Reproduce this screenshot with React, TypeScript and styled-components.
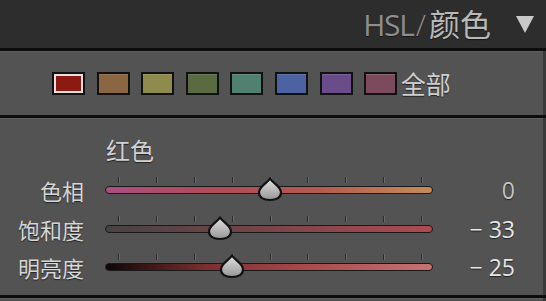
import styled, { createGlobalStyle } from "styled-components";

const GlobalStyle = createGlobalStyle`
  body {
    margin: 0;
    background: #3a3a3a;
  }
`;

const CJK = `"Noto Sans CJK SC", "Noto Sans", sans-serif`;
const LATIN = `"Open Sans", "Noto Sans CJK SC", sans-serif`;

const Frame = styled.div`
  width: 546px;
  height: 301px;
  display: flex;
  flex-direction: column;
  background: #3a3a3a;
  overflow: hidden;
`;

const Header = styled.div`
  height: 48px;
  flex: none;
  background: #2d2d2d;
  display: flex;
  align-items: center;
  justify-content: flex-end;
  padding-right: 11px;
  gap: 24px;
`;

const Title = styled.div`
  display: flex;
  align-items: baseline;
  font-size: 30px;
  line-height: 48px;
  color: #8e8e8e;
  text-shadow: 0 1px 1px rgba(0, 0, 0, 0.5);
  .hsl {
    font-family: ${LATIN};
    letter-spacing: -1.2px;
  }
  .slash {
    font-family: ${LATIN};
    font-weight: 300;
    margin: 0 3px 0 2px;
  }
  .active {
    font-family: ${CJK};
    font-size: 31px;
    color: #b9b9b9;
  }
`;

const Collapse = styled.svg`
  display: block;
`;

const Rule = styled.div`
  height: 3px;
  flex: none;
  background: #0d0d0d;
`;

const Panel = styled.div<{ $h: number }>`
  width: 543px;
  height: ${(p) => p.$h}px;
  flex: none;
  background: #535353;
  box-shadow: inset 0 1px 0 #5e5e5e;
`;

const SwatchRow = styled.div`
  height: 100%;
  display: flex;
  align-items: center;
  padding-left: 52px;
  gap: 11.6px;
`;

const Swatch = styled.div<{ $c: string; $on?: boolean }>`
  width: 33px;
  height: 23px;
  box-sizing: border-box;
  border: 2px solid #111;
  background: ${(p) => p.$c};
  box-shadow: ${(p) => (p.$on ? "inset 0 0 0 2px #e8e0e0" : "inset 0 1px 0 rgba(255,255,255,0.12)")};
`;

const AllLabel = styled.span`
  font-family: ${CJK};
  font-size: 25px;
  color: #cfcfcf;
  margin-left: -8px;
  text-shadow: 0 1px 1px rgba(0, 0, 0, 0.6);
`;

const Adjust = styled.div`
  padding-top: 18px;
`;

const ColorName = styled.div`
  font-family: ${CJK};
  font-size: 24px;
  line-height: 28px;
  color: #d2d2d2;
  padding-left: 106px;
  margin-bottom: 7px;
  text-shadow: 0 1px 1px rgba(0, 0, 0, 0.6);
`;

const Row = styled.div`
  display: grid;
  grid-template-columns: 84px 21px 328px 82px;
  height: 38.4px;
`;

const Label = styled.div`
  grid-column: 1;
  font-family: ${CJK};
  font-size: 22px;
  color: #d6d6d6;
  display: flex;
  align-items: center;
  justify-content: flex-end;
  text-shadow: 0 1px 1px rgba(0, 0, 0, 0.6);
`;

const SliderCell = styled.div`
  grid-column: 3;
  position: relative;
`;

const Track = styled.div<{ $g: string }>`
  position: absolute;
  left: 0;
  right: 0;
  top: 50%;
  height: 8px;
  margin-top: -4px;
  box-sizing: border-box;
  border-radius: 4px;
  border: 1.5px solid #1a1a1a;
  background: ${(p) => p.$g};
`;

const Ticks = styled.div`
  position: absolute;
  left: 13px;
  right: 11px;
  top: 50%;
  margin-top: -13px;
  height: 6px;
  display: flex;
  justify-content: space-between;
`;

const Tick = styled.span`
  width: 1px;
  height: 6px;
  background: #2c2c2c;
  box-shadow: 1px 0 0 #6a6a6a;
`;

const Thumb = styled.svg`
  position: absolute;
  top: 50%;
  margin-top: -13px;
  transform: translateX(-50%);
`;

const Value = styled.div<{ $dim?: boolean }>`
  grid-column: 4;
  font-family: ${LATIN};
  font-size: 23px;
  color: ${(p) => (p.$dim ? "#c4c4c4" : "#e6e6e6")};
  display: flex;
  align-items: center;
  justify-content: flex-end;
  white-space: pre;
  text-shadow: 0 1px 1px rgba(0, 0, 0, 0.6);
`;

const swatches = ["#8c1a10", "#8b6642", "#8e8b4c", "#5a6b42", "#4f8070", "#4c62a2", "#6a4c8a", "#7b4a5c"];

const sliders = [
  { label: "色相", value: 0, g: "linear-gradient(90deg, #a94f82, #b24b55 35%, #b45a4e 65%, #c48c58)" },
  { label: "饱和度", value: -33, g: "linear-gradient(90deg, #474343, #6e4448 40%, #b04a52)" },
  { label: "明亮度", value: -25, g: "linear-gradient(90deg, #0c0606, #7a2e2e 30%, #a8484a 60%, #c87274)" },
];

const DropThumb = ({ id, x }: { id: string; x: number }) => (
  <Thumb width="26" height="25" viewBox="0 0 26 25" style={{ left: x }}>
    <defs>
      <linearGradient id={id} x1="0" y1="0" x2="0" y2="1">
        <stop offset="0" stopColor="#e2e2e2" />
        <stop offset="1" stopColor="#969696" />
      </linearGradient>
    </defs>
    <path
      d="M13 1.5 C15.5 6 24 9.5 24 15.5 C24 20.5 19.5 23 13 23 C6.5 23 2 20.5 2 15.5 C2 9.5 10.5 6 13 1.5 Z"
      fill={`url(#${id})`}
      stroke="#111"
      strokeWidth="2.2"
      strokeLinejoin="round"
    />
  </Thumb>
);

const App = () => {
  return (
    <>
      <GlobalStyle />
      <Frame>
        <Header>
          <Title>
            <span className="hsl">HSL</span>
            <span className="slash">/</span>
            <span className="active">颜色</span>
          </Title>
          <Collapse width="20" height="19" viewBox="0 0 20 19">
            <path d="M1 1 H19 L10 18 Z" fill="#c8c8c8" />
          </Collapse>
        </Header>
        <Rule />
        <Panel $h={64}>
          <SwatchRow>
            {swatches.map((c, i) => (
              <Swatch key={c} $c={c} $on={i === 0} />
            ))}
            <AllLabel>全部</AllLabel>
          </SwatchRow>
        </Panel>
        <Rule />
        <Panel $h={177}>
          <Adjust>
            <ColorName>红色</ColorName>
            {sliders.map((s, i) => (
              <Row key={s.label}>
                <Label>{s.label}</Label>
                <SliderCell>
                  <Ticks>
                    {Array.from({ length: 9 }).map((_, k) => (
                      <Tick key={k} />
                    ))}
                  </Ticks>
                  <Track $g={s.g} />
                  <DropThumb id={`thumb${i}`} x={13 + ((s.value + 100) / 200) * 304} />
                </SliderCell>
                <Value $dim={s.value === 0}>{s.value === 0 ? "0" : `− ${Math.abs(s.value)}`}</Value>
              </Row>
            ))}
          </Adjust>
        </Panel>
        <Rule />
        <Panel $h={10} />
      </Frame>
    </>
  );
};

export default App;
